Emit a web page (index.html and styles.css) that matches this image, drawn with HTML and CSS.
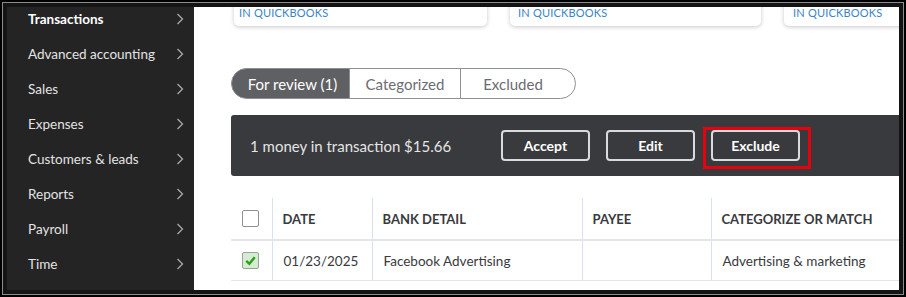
FILE: index.html
```html
<!DOCTYPE html>
<html lang="en">
<head>
	<meta charset="UTF-8">
	<meta name="viewport" content="width=device-width, initial-scale=1.0">
	<title>Bank transactions</title>
	<link rel="stylesheet" href="styles.css">
</head>
<body>
	<div class="frame">
		<div class="screen">
			<aside class="sidebar">
				<ul class="nav">
					<li class="active">Transactions<svg class="chev" viewBox="0 0 8 12"><polyline points="1.5,1 6.5,6 1.5,11"/></svg></li>
					<li>Advanced accounting<svg class="chev" viewBox="0 0 8 12"><polyline points="1.5,1 6.5,6 1.5,11"/></svg></li>
					<li>Sales<svg class="chev" viewBox="0 0 8 12"><polyline points="1.5,1 6.5,6 1.5,11"/></svg></li>
					<li>Expenses<svg class="chev" viewBox="0 0 8 12"><polyline points="1.5,1 6.5,6 1.5,11"/></svg></li>
					<li>Customers &amp; leads<svg class="chev" viewBox="0 0 8 12"><polyline points="1.5,1 6.5,6 1.5,11"/></svg></li>
					<li>Reports<svg class="chev" viewBox="0 0 8 12"><polyline points="1.5,1 6.5,6 1.5,11"/></svg></li>
					<li>Payroll<svg class="chev" viewBox="0 0 8 12"><polyline points="1.5,1 6.5,6 1.5,11"/></svg></li>
					<li>Time<svg class="chev" viewBox="0 0 8 12"><polyline points="1.5,1 6.5,6 1.5,11"/></svg></li>
				</ul>
			</aside>
			<main class="main">
				<div class="cards">
					<div class="card"><span class="card-label">IN QUICKBOOKS</span><span class="mark orange"></span></div>
					<div class="card"><span class="card-label">IN QUICKBOOKS</span><span class="mark blue"></span></div>
					<div class="card"><span class="card-label">IN QUICKBOOKS</span></div>
				</div>

				<div class="tabs">
					<button class="tab active">For review (1)</button>
					<button class="tab">Categorized</button>
					<button class="tab">Excluded</button>
				</div>

				<div class="bulk-bar">
					<span class="bulk-text">1 money in transaction $15.66</span>
					<div class="bulk-actions">
						<button class="bulk-btn">Accept</button>
						<button class="bulk-btn">Edit</button>
						<span class="marked"><button class="bulk-btn">Exclude</button></span>
					</div>
				</div>

				<table class="txn-table">
					<colgroup>
						<col class="c-check">
						<col class="c-date">
						<col class="c-bank">
						<col class="c-payee">
						<col>
					</colgroup>
					<thead>
						<tr>
							<th><span class="box"></span></th>
							<th>DATE</th>
							<th>BANK DETAIL</th>
							<th>PAYEE</th>
							<th>CATEGORIZE OR MATCH</th>
						</tr>
					</thead>
					<tbody>
						<tr>
							<td><span class="box checked"><svg viewBox="0 0 16 16"><polyline points="3.5,8.5 6.8,11.5 12.5,4.5"/></svg></span></td>
							<td>01/23/2025</td>
							<td>Facebook Advertising</td>
							<td></td>
							<td>Advertising &amp; marketing</td>
						</tr>
					</tbody>
				</table>
			</main>
		</div>
	</div>
</body>
</html>
```

FILE: styles.css
```css
body{
	margin: 0;
	font-family: Lato, "Open Sans", sans-serif;
}
.frame{
	width: 906px;
	height: 297px;
	box-sizing: border-box;
	border: 2px solid #000;
	padding: 1px;
	background-color: #8c8c8c;
}
.screen{
	height: 100%;
	box-sizing: border-box;
	border: 4px solid #141414;
	display: flex;
	overflow: hidden;
	background-color: #fff;
}

/* left menu */
.sidebar{
	width: 187px;
	flex-shrink: 0;
	background-color: #242424;
	overflow: hidden;
}
.nav{
	list-style: none;
	margin: -6px 0 0 0;
	padding: 0;
}
.nav li{
	height: 35px;
	display: flex;
	align-items: center;
	justify-content: space-between;
	padding: 0 10px 0 21px;
	color: #e3e3e3;
	font-size: 13.5px;
}
.nav li.active{
	color: #fff;
	font-weight: bold;
}
.chev{
	width: 8px;
	height: 12px;
	fill: none;
	stroke: #a9a9a9;
	stroke-width: 1.3;
}

/* content */
.main{
	flex: 1;
	min-width: 0;
	padding-left: 37px;
	overflow: hidden;
}
.cards{
	display: flex;
	gap: 23px;
	margin: -11px 0 0 3px;
}
.card{
	width: 253px;
	height: 30px;
	flex-shrink: 0;
	box-sizing: border-box;
	padding: 5px 0 0 5px;
	border-radius: 0 0 5px 5px;
	background-color: #fff;
	box-shadow: 0 1px 4px rgba(0,0,0,.22);
	position: relative;
}
.card:nth-child(2){
	width: 251px;
	padding-left: 8px;
}
.card:nth-child(3){
	padding-left: 9px;
}
.card-label{
	color: #3a84c6;
	font-size: 11px;
	line-height: 14px;
	letter-spacing: .2px;
}
.mark{
	position: absolute;
	top: 5px;
	width: 3px;
	height: 5px;
}
.mark.orange{
	left: 217px;
	background-color: #f7941d;
}
.mark.blue{
	left: 214px;
	width: 3px;
	height: 4px;
	top: 6px;
	background-color: #2c5b9b;
	transform: skewX(-30deg);
}

/* tabs */
.tabs{
	display: flex;
	margin-top: 42px;
	height: 31px;
	width: 345px;
}
.tab{
	flex-shrink: 0;
	height: 31px;
	box-sizing: border-box;
	border: 1.5px solid #8d9096;
	margin-left: -1.5px;
	background-color: #fff;
	color: #6b6c72;
	font-family: Lato, "Open Sans", sans-serif;
	font-size: 15px;
	padding: 0;
}
.tab:nth-child(1){
	width: 119px;
	margin-left: 0;
	border-radius: 16px 0 0 16px;
	padding-left: 4px;
}
.tab:nth-child(2){
	width: 113px;
}
.tab:nth-child(3){
	width: 116px;
	border-radius: 0 16px 16px 0;
	padding-right: 10px;
}
.tab.active{
	background-color: #5f6064;
	color: #fff;
}

/* bulk action bar */
.bulk-bar{
	display: flex;
	align-items: center;
	margin-top: 16px;
	height: 61px;
	border-radius: 3px 0 0 3px;
	background-color: #393a3d;
}
.bulk-text{
	width: 270px;
	flex-shrink: 0;
	box-sizing: border-box;
	padding-left: 19px;
	color: #e4e4e4;
	font-size: 15px;
}
.bulk-actions{
	display: flex;
	gap: 16px;
	margin-top: -1px;
}
.bulk-btn{
	width: 89px;
	height: 31px;
	border: 2px solid #d8dadd;
	border-radius: 4px;
	background-color: #393a3d;
	color: #fff;
	font-family: Lato, "Open Sans", sans-serif;
	font-weight: bold;
	font-size: 14px;
}
.marked{
	position: relative;
	display: block;
}
.marked::after{
	content: "";
	position: absolute;
	left: -8px;
	top: -3px;
	width: 108px;
	height: 42px;
	box-sizing: border-box;
	border: 3px solid #e8000b;
}

/* table */
.txn-table{
	margin-top: 22px;
	width: 760px;
	border-collapse: collapse;
	table-layout: fixed;
	color: #393a3d;
}
.c-check{ width: 41px; }
.c-date{ width: 100px; }
.c-bank{ width: 210px; }
.c-payee{ width: 129px; }
.txn-table th{
	height: 41px;
	text-align: left;
	font-size: 13px;
	font-weight: bold;
	padding: 0 0 0 10px;
	border-bottom: 2px solid #e3e5e8;
	border-left: 1px solid #d6e2ef;
}
.txn-table td{
	height: 39px;
	font-size: 13.5px;
	padding: 0 0 0 11px;
	border-bottom: 1px solid #e3e5e8;
	border-left: 1px solid #d6e2ef;
}
.txn-table th:first-child,
.txn-table td:first-child{
	border-left: none;
	padding-left: 11px;
}
.box{
	display: block;
	width: 17px;
	height: 17px;
	box-sizing: border-box;
	border: 1px solid #8d9096;
	border-radius: 2px;
	background-color: #fff;
}
.box.checked{
	background-color: #d4ecd0;
	border-color: #9aa09c;
}
.box svg{
	display: block;
	width: 15px;
	height: 15px;
	fill: none;
	stroke: #2ca01c;
	stroke-width: 2.6;
}
```
